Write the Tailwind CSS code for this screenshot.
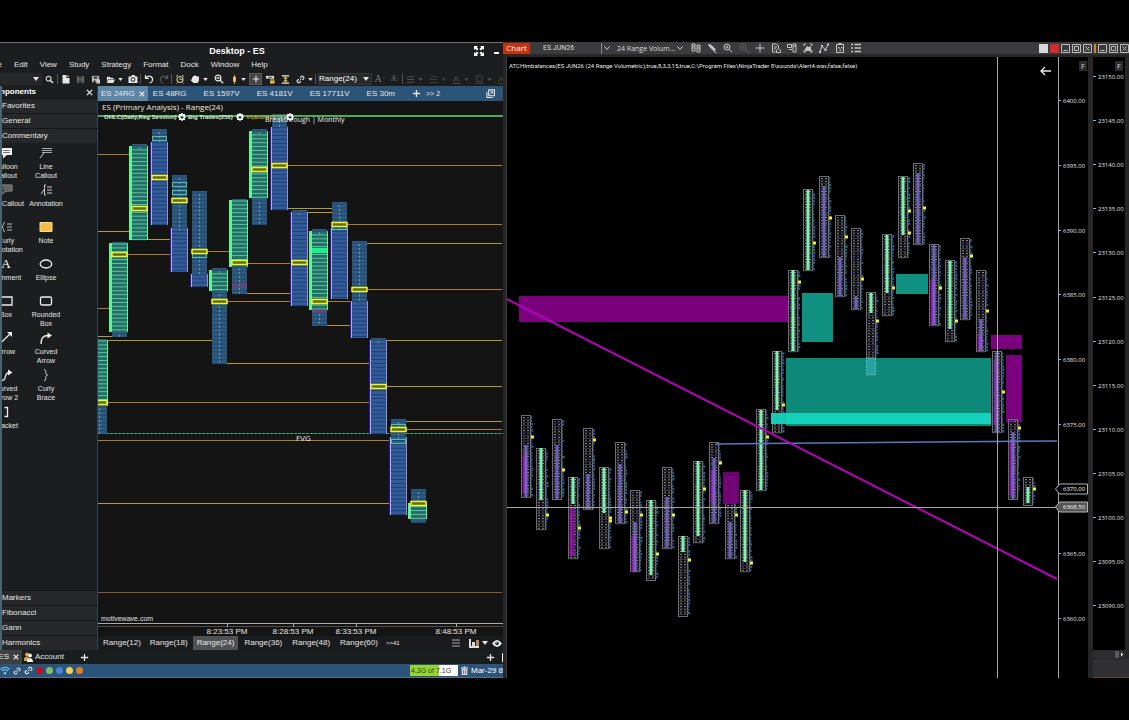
<!DOCTYPE html>
<html lang="en">
<head>
    <meta charset="UTF-8">
    <meta name="viewport" content="width=device-width, initial-scale=1.0">
    <title>Desktop - ES</title>
    <script src="https://cdn.jsdelivr.net/npm/@tailwindcss/browser@4"></script>
</head>
<body class="bg-black">
    <!-- Icon sprites -->
    <svg class="hidden">
        <symbol id="caret" viewBox="0 0 6 4"><path d="M0 0h6L3 4z" fill="currentColor"/></symbol>
        <symbol id="search" viewBox="0 0 10 10"><circle cx="4" cy="4" r="2.7" fill="none" stroke="currentColor" stroke-width="1.2"/><path d="M6 6l3 3" stroke="currentColor" stroke-width="1.6"/></symbol>
        <symbol id="zoomout" viewBox="0 0 10 10"><circle cx="4" cy="4" r="2.9" fill="none" stroke="currentColor" stroke-width="1.2"/><path d="M2.5 4h3M6.2 6.2l3 3" stroke="currentColor" stroke-width="1.3"/></symbol>
        <symbol id="zoomin" viewBox="0 0 10 10"><circle cx="4" cy="4" r="3" fill="none" stroke="currentColor"/><path d="M2.5 4h3M4 2.5v3M6.2 6.2l3 3" stroke="currentColor"/></symbol>
        <symbol id="doc" viewBox="0 0 10 10"><path d="M1.5 1h4v3h3v5.500h-7z M6.500 1l2 2h-2z" fill="currentColor"/></symbol>
        <symbol id="save" viewBox="0 0 10 10"><path d="M1 1h8v8H1z" fill="currentColor"/><path d="M3 1h4v3H3zM3 6h4v3H3z" fill="#1e1e1e"/><path d="M3.5 2.5h3M3.5 7.5h3" stroke="currentColor"/></symbol>
        <symbol id="saveas" viewBox="0 0 10 10"><path d="M1 1h8v7H1z" fill="currentColor"/><path d="M3 2h4v2H3zM3 6h2v2H3z" fill="#1e1e1e"/><path d="M6 5h4v4.500H6z" fill="#ccc"/></symbol>
        <symbol id="folder" viewBox="0 0 10 10"><path d="M1 2h3l1 1h3v1.500H2.500L1 8z" fill="currentColor"/><path d="M3 5h7L8 9H1z" fill="currentColor"/></symbol>
        <symbol id="camera" viewBox="0 0 10 10"><path d="M.5 2.5H3L4 1h2.500l1 1.500h2V9h-9z" fill="currentColor"/><circle cx="5" cy="5.500" r="1.900" fill="none" stroke="#1e1e1e" stroke-width="1"/></symbol>
        <symbol id="undo" viewBox="0 0 10 10"><path d="M1.500 1v3.500H5M2 4c2-3 7-2 6.500 2C8.300 7.500 7 8.700 5.500 9" fill="none" stroke="currentColor" stroke-width="1.2"/></symbol>
        <symbol id="redo" viewBox="0 0 10 10"><path d="M8.500 1v3.500H5M8 4C6 1 1 2 1.500 6c.2 1.500 1.500 2.700 3 3" fill="none" stroke="currentColor" stroke-width="1.2"/></symbol>
        <symbol id="alarm" viewBox="0 0 10 10"><circle cx="5" cy="5.500" r="3" fill="none" stroke="currentColor" stroke-width="1.2"/><path d="M5 3.500v2h2M1 2.500L3 1M9 2.500L7 1M2.500 8.500L1.500 9.500M7.500 8.500l1 1" fill="none" stroke="currentColor"/></symbol>
        <symbol id="hand" viewBox="0 0 10 10"><path d="M2 3.500l1-.5V2h1.300l.2-.7h1l.2.700H7v.6h2v4L7.500 9H3.500L.5 6l.8-.8L2 5.700z" fill="currentColor"/></symbol>
        <symbol id="candle" viewBox="0 0 10 10"><path d="M5 0v10" stroke="#d9b25c"/><path d="M3.500 2h3v5.500h-3z" fill="#f2cf7a"/></symbol>
        <symbol id="plus" viewBox="0 0 10 10"><path d="M5 1v8M1 5h8" stroke="currentColor" stroke-width="1.4"/></symbol>
        <symbol id="lock" viewBox="0 0 10 10"><path d="M0 1h9v3H0z" fill="#e8e8e8"/><path d="M2 2.500h5" stroke="#333"/><path d="M4.500 6h5v3.500h-5z" fill="#e9b949"/><path d="M5.500 6V4.500h3V6" fill="none" stroke="#e9b949"/></symbol>
        <symbol id="ibeam" viewBox="0 0 10 10"><path d="M1 1h8M1 9h8" stroke="#eee" stroke-width="1.4"/><path d="M5 2v6M3 3.500h4M3 6.500h4" stroke="#e9b949" stroke-width="1.3"/></symbol>
        <symbol id="link" viewBox="0 0 10 10"><path d="M4.500 3L6 1.500c1-1 3.500 1 2.500 2.500L7 5.500M5.500 7L4 8.500C3 9.500.5 7.500 1.500 6L3 4.500" fill="none" stroke="currentColor" stroke-width="1.3"/><path d="M3.800 6.200l2.400-2.400" stroke="currentColor"/></symbol>
        <symbol id="lines" viewBox="0 0 10 10"><path d="M1 2h8M1 5h8M1 8h8" stroke="currentColor" stroke-width="1.2"/></symbol>
        <symbol id="bigA" viewBox="0 0 10 10"><path d="M1.500 8L4.500 1l3 7M2.500 5.500h4M.5 9.400h9" fill="none" stroke="currentColor"/></symbol>
        <symbol id="fillbox" viewBox="0 0 10 10"><path d="M2 1h6v6H2zM.5 9.300h9" fill="none" stroke="currentColor"/></symbol>
        <symbol id="close" viewBox="0 0 8 8"><path d="M1 1l6 6M7 1L1 7" stroke="currentColor" stroke-width="1.5"/></symbol>
        <symbol id="popout" viewBox="0 0 10 10"><path d="M3 1h6.500v6.500H3z M1 3v6.500h6.500" fill="none" stroke="currentColor" stroke-width="1.2"/><path d="M4.500 6l3-3M5 3h2.500v2.500" fill="none" stroke="currentColor"/></symbol>
        <symbol id="expand" viewBox="0 0 10 10"><path d="M0 0h4L2.800 1.200l1.700 1.700-1.600 1.600-1.700-1.700L0 4zM10 0v4L8.800 2.800 7.100 4.500 5.500 2.900l1.700-1.700L6 0zM0 10V6l1.200 1.200 1.700-1.700 1.600 1.600-1.700 1.700L4 10zM10 10H6l1.200-1.200-1.700-1.700 1.600-1.600 1.700 1.700L10 6z" fill="currentColor"/></symbol>
        <symbol id="gear" viewBox="0 0 8 8"><circle cx="4" cy="4" r="2.400" fill="none" stroke="#fff" stroke-width="1.6"/><path d="M4 0v1.500M4 6.500V8M0 4h1.500M6.500 4H8M1.200 1.200l1 1M5.800 5.800l1 1M6.800 1.200l-1 1M2.200 5.800l-1 1" stroke="#fff" stroke-width="1.2"/></symbol>
        <symbol id="t-balloon" viewBox="0 0 14 12"><path d="M2 1h11v7H8l-4 3.500V8H2z" fill="#f2f2f2"/><path d="M4 3.500h7M4 5.500h7" stroke="#777"/></symbol>
        <symbol id="t-line" viewBox="0 0 14 12"><path d="M3 1.500h10M3 3.500h10M3 5.500h10" stroke="#aaa"/><path d="M5 6L1 11" stroke="#ccc"/></symbol>
        <symbol id="t-boxcall" viewBox="0 0 14 12"><path d="M2 1h11v6H7l-5 4V7z" fill="#444" stroke="#999"/><path d="M4 3h8M4 5h8" stroke="#888"/></symbol>
        <symbol id="t-annot" viewBox="0 0 14 12"><path d="M7 1H5.500v10H7M5.500 5L2 10M8 3h5M8 6h5M8 9h5" fill="none" stroke="#ccc"/></symbol>
        <symbol id="t-curlyan" viewBox="0 0 14 12"><path d="M6 1C4 1 5 5 3 6H0M3 6c2 1 1 5 3 5M8 3h5M8 6h5M8 9h5" fill="none" stroke="#bbb"/></symbol>
        <symbol id="t-note" viewBox="0 0 14 12"><path d="M1 1.500h12v9H1z" fill="#f2bd4d" stroke="#ffdc8a"/></symbol>
        <symbol id="t-ellipse" viewBox="0 0 14 12"><ellipse cx="7" cy="6" rx="5.800" ry="4" fill="none" stroke="#eee" stroke-width="1.3"/></symbol>
        <symbol id="t-box" viewBox="0 0 14 12"><path d="M1 2h12v8H1z" fill="none" stroke="#eee" stroke-width="1.3"/></symbol>
        <symbol id="t-rbox" viewBox="0 0 14 12"><rect x="1.500" y="2" width="11" height="8" rx="1.500" fill="none" stroke="#eee" stroke-width="1.3"/></symbol>
        <symbol id="t-arrow" viewBox="0 0 14 12"><path d="M1 11.500L11 2" stroke="#eee" stroke-width="1.3"/><path d="M13 0v5L8 0z" fill="#eee"/></symbol>
        <symbol id="t-carrow" viewBox="0 0 14 12"><path d="M2 12C2 6 4 3.500 9 3.500" fill="none" stroke="#eee" stroke-width="1.3"/><path d="M8.500.5l4.500 3-4.500 3z" fill="#eee"/></symbol>
        <symbol id="t-carrow2" viewBox="0 0 14 12"><path d="M1 11c8 2 3-7 9-7.500" fill="none" stroke="#eee" stroke-width="1.3"/><path d="M9 .5l4.500 3-4.500 3z" fill="#eee"/></symbol>
        <symbol id="t-brace" viewBox="0 0 14 12"><path d="M5 .5c3.500 0 0 4.500 3.500 5.500C5 7 8.500 11.500 5 11.500" fill="none" stroke="#ccc"/></symbol>
        <symbol id="t-bracket" viewBox="0 0 14 12"><path d="M5.500 1.500h3v9h-3" fill="none" stroke="#eee" stroke-width="1.3"/></symbol>
    </svg>

    <div class="h-screen flex flex-col py-[42px]">
        <main class="flex-1 min-h-0 grid grid-cols-[503fr_626fr] bg-[#262626]">

            <!-- Analysis window -->
            <section class="min-w-0 flex flex-col overflow-hidden bg-[#1c1d1e] border-t border-[#6f6f6f] text-[8px] leading-[10px] text-[#e6e6e6] font-['Liberation_Sans',sans-serif]">
                <header class="h-[15px] shrink-0 flex items-center">
                    <h1 class="flex-1 text-center text-[9px] font-bold text-white">Desktop - ES</h1>
                    <div class="flex items-center gap-[10px] pr-1 text-white">
                        <button aria-label="Full screen"><svg class="block size-[10px]"><use href="#expand"/></svg></button>
                        <button aria-label="Minimize" class="w-[5px] h-[2px] mt-1 bg-white"></button>
                    </div>
                </header>

                <nav class="h-[14px] shrink-0 flex items-center gap-[12px] -ml-[11px]">
                    <a href="#">File</a>
                    <a href="#">Edit</a>
                    <a href="#">View</a>
                    <a href="#">Study</a>
                    <a href="#">Strategy</a>
                    <a href="#">Format</a>
                    <a href="#">Dock</a>
                    <a href="#">Window</a>
                    <a href="#">Help</a>
                </nav>

                <div class="h-[14px] shrink-0 flex items-center overflow-hidden">
                    <button aria-label="Symbol" class="w-[42px] h-[12px] shrink-0 flex items-center justify-end pr-[3px] bg-[#262728]"><svg class="w-[6px] h-[4px]"><use href="#caret"/></svg></button>
                    <button aria-label="Search" class="w-[15px] shrink-0 flex justify-center"><svg class="size-[9px]"><use href="#search"/></svg></button>
                    <span class="w-px h-[10px] shrink-0 bg-[#555]"></span>
                    <button aria-label="New" class="w-[15px] shrink-0 flex justify-center"><svg class="size-[10px]"><use href="#doc"/></svg></button>
                    <button aria-label="Save" class="w-[15px] shrink-0 flex justify-center text-[#666]"><svg class="size-[9px]"><use href="#save"/></svg></button>
                    <button aria-label="Save as" class="w-[15px] shrink-0 flex justify-center text-[#bbb]"><svg class="size-[9px]"><use href="#saveas"/></svg></button>
                    <button aria-label="Open" class="w-[22px] shrink-0 flex items-center justify-center gap-[3px]"><svg class="size-[9px]"><use href="#folder"/></svg><svg class="w-[5px] h-[3px]"><use href="#caret"/></svg></button>
                    <button aria-label="Snapshot" class="w-[15px] shrink-0 flex justify-center"><svg class="size-[10px]"><use href="#camera"/></svg></button>
                    <span class="w-px h-[10px] shrink-0 bg-[#555]"></span>
                    <button aria-label="Undo" class="w-[15px] shrink-0 flex justify-center"><svg class="size-[10px]"><use href="#undo"/></svg></button>
                    <button aria-label="Redo" class="w-[15px] shrink-0 flex justify-center text-[#555]"><svg class="size-[10px]"><use href="#redo"/></svg></button>
                    <span class="w-px h-[10px] shrink-0 bg-[#555]"></span>
                    <button aria-label="Alerts" class="w-[15px] shrink-0 flex justify-center text-[#cdbf9a]"><svg class="size-[10px]"><use href="#alarm"/></svg></button>
                    <button aria-label="Pan" class="w-[24px] shrink-0 flex items-center justify-center gap-[3px]"><svg class="size-[10px]"><use href="#hand"/></svg><svg class="w-[5px] h-[3px]"><use href="#caret"/></svg></button>
                    <button aria-label="Zoom out" class="w-[16px] shrink-0 flex justify-center"><svg class="size-[10px]"><use href="#zoomout"/></svg></button>
                    <button aria-label="Bar type" class="w-[22px] shrink-0 flex items-center justify-center gap-[2px]"><svg class="size-[9px]"><use href="#candle"/></svg><svg class="w-[5px] h-[3px]"><use href="#caret"/></svg></button>
                    <button aria-label="Cursor" class="w-[13px] h-[12px] shrink-0 flex items-center justify-center bg-[#454545] border border-[#5a5a5a]"><svg class="size-[8px]"><use href="#plus"/></svg></button>
                    <button aria-label="Lock" class="w-[16px] shrink-0 flex justify-center"><svg class="size-[9px]"><use href="#lock"/></svg></button>
                    <button aria-label="Fit" class="w-[15px] shrink-0 flex justify-center"><svg class="size-[9px]"><use href="#ibeam"/></svg></button>
                    <button aria-label="Link" class="w-[22px] shrink-0 flex items-center justify-center gap-[3px]"><svg class="size-[9px]"><use href="#link"/></svg><svg class="w-[5px] h-[3px]"><use href="#caret"/></svg></button>
                    <span class="w-px h-[10px] shrink-0 bg-[#555]"></span>
                    <label class="ml-[2px] w-[54px] h-[12px] shrink-0 flex items-center bg-[#28292a] border border-[#353535]">
                        <select aria-label="Bar size" class="appearance-none w-[44px] leading-[10px] bg-transparent text-white"><option>Range(24)</option></select>
                        <svg class="w-[6px] h-[4px] shrink-0"><use href="#caret"/></svg>
                    </label>
                    <button class="w-[15px] shrink-0 font-['Liberation_Serif',serif] text-[10px] text-[#777]">A<sup class="text-[5px]">+</sup></button>
                    <button class="w-[15px] shrink-0 font-['Liberation_Serif',serif] text-[8px] text-[#777]">A<sup class="text-[5px]">-</sup></button>
                    <span class="w-px h-[10px] shrink-0 bg-[#555]"></span>
                    <button aria-label="Line width" class="w-[23px] shrink-0 flex items-center justify-center gap-[3px] text-[#505050]"><svg class="size-[9px]"><use href="#lines"/></svg><svg class="w-[5px] h-[3px]"><use href="#caret"/></svg></button>
                    <button aria-label="Line style" class="w-[23px] shrink-0 flex items-center justify-center gap-[3px] text-[#3c3c3c]"><svg class="size-[9px]"><use href="#lines"/></svg><svg class="w-[5px] h-[3px]"><use href="#caret"/></svg></button>
                    <button aria-label="Text color" class="w-[23px] shrink-0 flex items-center justify-center gap-[3px] text-[#4a4a4a]"><svg class="size-[9px]"><use href="#bigA"/></svg><svg class="w-[5px] h-[3px]"><use href="#caret"/></svg></button>
                    <button aria-label="Fill color" class="w-[23px] shrink-0 flex items-center justify-center gap-[3px] text-[#4a4a4a]"><svg class="size-[9px]"><use href="#fillbox"/></svg><svg class="w-[5px] h-[3px]"><use href="#caret"/></svg></button>
                    <button aria-label="Erase" class="w-[12px] shrink-0 flex justify-center text-[#3c3c3c]"><svg class="size-[9px]"><use href="#bigA"/></svg></button>
                </div>

                <div class="flex-1 min-h-0 flex">
                    <!-- Components -->
                    <aside class="w-[97px] shrink-0 flex flex-col overflow-hidden border-l-2 border-[#4b6474]">
                        <div class="h-[12px] shrink-0 flex items-center justify-between pr-1">
                            <h2 class="w-[34px] flex justify-end overflow-hidden font-bold text-white">Components</h2>
                            <button aria-label="Close components"><svg class="block size-[7px]"><use href="#close"/></svg></button>
                        </div>
                        <button class="h-[15px] shrink-0 text-left bg-[#262728] border-t border-[#161616]">Favorites</button>
                        <button class="h-[15px] shrink-0 text-left bg-[#262728] border-t border-[#161616]">General</button>
                        <button class="h-[15px] shrink-0 text-left bg-[#262728] border-t border-[#161616]">Commentary</button>
                        <div class="flex-1 pt-[4px] -ml-[16px] grid grid-cols-[40px_40px] auto-rows-[37px] text-[7px] leading-[9px]">
                            <button class="flex flex-col items-center gap-[3px]"><svg class="w-[14px] h-[12px] shrink-0"><use href="#t-balloon"/></svg><span class="w-[24px]">Balloon Callout</span></button>
                            <button class="flex flex-col items-center gap-[3px]"><svg class="w-[14px] h-[12px] shrink-0"><use href="#t-line"/></svg><span class="w-[24px]">Line Callout</span></button>
                            <button class="flex flex-col items-center gap-[3px]"><svg class="w-[14px] h-[12px] shrink-0"><use href="#t-boxcall"/></svg><span class="whitespace-nowrap">Box Callout</span></button>
                            <button class="flex flex-col items-center gap-[3px]"><svg class="w-[14px] h-[12px] shrink-0"><use href="#t-annot"/></svg>Annotation</button>
                            <button class="flex flex-col items-center gap-[3px]"><svg class="w-[14px] h-[12px] shrink-0"><use href="#t-curlyan"/></svg>Curly Annotation</button>
                            <button class="flex flex-col items-center gap-[3px]"><svg class="w-[14px] h-[12px] shrink-0"><use href="#t-note"/></svg>Note</button>
                            <button class="flex flex-col items-center gap-[3px]"><span class="h-[12px] shrink-0 font-['Liberation_Serif',serif] text-[13px] leading-[12px] text-white">A</span>Comment</button>
                            <button class="flex flex-col items-center gap-[3px]"><svg class="w-[14px] h-[12px] shrink-0"><use href="#t-ellipse"/></svg>Ellipse</button>
                            <button class="flex flex-col items-center gap-[3px]"><svg class="w-[14px] h-[12px] shrink-0"><use href="#t-box"/></svg>Box</button>
                            <button class="flex flex-col items-center gap-[3px]"><svg class="w-[14px] h-[12px] shrink-0"><use href="#t-rbox"/></svg><span class="w-[34px]">Rounded Box</span></button>
                            <button class="flex flex-col items-center gap-[3px]"><svg class="w-[14px] h-[12px] shrink-0"><use href="#t-arrow"/></svg>Arrow</button>
                            <button class="flex flex-col items-center gap-[3px]"><svg class="w-[14px] h-[12px] shrink-0"><use href="#t-carrow"/></svg>Curved Arrow</button>
                            <button class="flex flex-col items-center gap-[3px]"><svg class="w-[14px] h-[12px] shrink-0"><use href="#t-carrow2"/></svg>Curved Arrow 2</button>
                            <button class="flex flex-col items-center gap-[3px]"><svg class="w-[14px] h-[12px] shrink-0"><use href="#t-brace"/></svg><span class="w-[24px]">Curly Brace</span></button>
                            <button class="flex flex-col items-center gap-[3px]"><svg class="w-[14px] h-[12px] shrink-0"><use href="#t-bracket"/></svg>Bracket</button>
                        </div>
                        <button class="h-[15px] shrink-0 text-left bg-[#262728] border-t border-[#161616]">Markers</button>
                        <button class="h-[15px] shrink-0 text-left bg-[#262728] border-t border-[#161616]">Fibonacci</button>
                        <button class="h-[15px] shrink-0 text-left bg-[#262728] border-t border-[#161616]">Gann</button>
                        <button class="h-[15px] shrink-0 text-left bg-[#262728] border-t border-[#161616]">Harmonics</button>
                    </aside>

                    <div class="flex-1 min-w-0 flex flex-col border-l border-[#28445e]">
                        <nav class="h-[15px] shrink-0 flex items-center gap-[17px] pr-1 overflow-hidden whitespace-nowrap bg-[#2c5479]">
                            <span class="h-full flex items-center gap-1 px-[3px] -mr-3 bg-[#5e86a8]"><a href="#">ES 24RG</a><button aria-label="Close tab"><svg class="block size-[6px]"><use href="#close"/></svg></button></span>
                            <a href="#">ES 48RG</a>
                            <a href="#">ES 1597V</a>
                            <a href="#">ES 4181V</a>
                            <a href="#">ES 17711V</a>
                            <a href="#">ES 30m</a>
                            <button aria-label="Add tab"><svg class="block size-[9px]"><use href="#plus"/></svg></button>
                            <a href="#" class="-ml-3 text-[7px]">&gt;&gt; 2</a>
                            <button aria-label="Pop out" class="ml-auto mr-1"><svg class="block size-[9px]"><use href="#popout"/></svg></button>
                        </nav>
                        <div class="flex-1 min-h-0 bg-[#141414]">
                            <svg id="rangeChart" class="block size-full" viewBox="98 101 405 535" preserveAspectRatio="xMinYMin meet"></svg>
                        </div>
                        <nav class="h-[14px] shrink-0 flex items-center pr-px overflow-hidden whitespace-nowrap bg-[#1a1b1c]">
                            <a href="#" class="px-[5px]">Range(12)</a>
                            <a href="#" class="px-[4px]">Range(18)</a>
                            <a href="#" class="mx-px px-[4px] py-[2px] bg-[#505152]">Range(24)</a>
                            <a href="#" class="px-[5px]">Range(36)</a>
                            <a href="#" class="px-[5px]">Range(48)</a>
                            <a href="#" class="px-[5px]">Range(60)</a>
                            <a href="#" class="px-[3px] text-[6px]">&gt;&gt;41</a>
                            <div class="ml-auto flex items-center gap-[4px]">
                                <button aria-label="List" class="mr-1"><svg class="block size-[10px] text-[#aaa]"><use href="#lines"/></svg></button>
                                <button aria-label="Layout" class="flex items-center gap-[2px]"><svg class="w-[11px] h-[9px]" viewBox="0 0 11 9"><path d="M0 0h2v7h8v2H0z" fill="#ddd"/><path d="M3 3h3v4H3z" fill="#ddd"/><path d="M7 1h3v6H7z" fill="#b98a55"/></svg><svg class="w-[6px] h-[4px]"><use href="#caret"/></svg></button>
                                <button aria-label="Visibility"><svg class="block w-[10px] h-[7px]" viewBox="0 0 10 7"><path d="M0 3.500Q5-3.500 10 3.500Q5 10.500 0 3.500z" fill="#eee"/><circle cx="5" cy="3.500" r="1.800" fill="#222"/><circle cx="4.500" cy="3" r=".6" fill="#fff"/></svg></button>
                            </div>
                        </nav>
                    </div>
                </div>

                <!-- Account row -->
                <div class="h-[14px] shrink-0 flex items-center bg-[#1a1d1e]">
                    <a href="#" class="w-[22px] h-full flex items-center justify-end gap-1 pr-[3px] overflow-hidden bg-[#3e3f40]">ES <svg class="size-[6px] shrink-0"><use href="#close"/></svg></a>
                    <a href="#" class="flex items-center gap-[2px] pl-[2px]">
                        <svg class="w-[9px] h-[10px]" viewBox="0 0 9 10"><circle cx="3" cy="2.500" r="2" fill="#d9a441"/><path d="M0 9V6l3-1.500L5 6v3z" fill="#d9a441"/><circle cx="6" cy="3.500" r="1.900" fill="#fff"/><path d="M3 10c0-5 6-5 6 0z" fill="#fff"/></svg>
                        Account
                    </a>
                    <button aria-label="Add account" class="ml-4"><svg class="block size-[9px]"><use href="#plus"/></svg></button>
                    <button aria-label="Add panel" class="ml-auto mr-[7px]"><svg class="block size-[9px]"><use href="#plus"/></svg></button>
                    <span class="w-px h-[9px] bg-white"></span>
                </div>

                <!-- Status bar -->
                <footer class="h-[14px] shrink-0 flex items-center gap-[3px] overflow-hidden bg-[#2c5479] border-b border-[#54728c]">
                    <svg class="w-[10px] h-[9px] shrink-0" viewBox="0 0 9 9"><path d="M0 3.500Q4.500-1 9 3.500M1.500 5.200Q4.500 2.200 7.500 5.200" fill="none" stroke="#7fc4f0" stroke-width="1.1"/><circle cx="4.500" cy="7.200" r="1.300" fill="#7fc4f0"/></svg>
                    <svg class="size-[8px] shrink-0"><use href="#link"/></svg>
                    <svg class="size-[9px] shrink-0"><use href="#link"/></svg>
                    <span class="size-[7px] shrink-0 rounded-full bg-[#c00f22]"></span>
                    <span class="size-[7px] shrink-0 rounded-full bg-[#7dbd62]"></span>
                    <span class="size-[7px] shrink-0 rounded-full bg-[#4d83d6]"></span>
                    <span class="size-[7px] shrink-0 rounded-full bg-[#f0cf52]"></span>
                    <span class="size-[7px] shrink-0 rounded-full bg-[#e07d20]"></span>
                    <span class="ml-auto w-[48px] h-[11px] shrink-0 pl-px text-[7px] leading-[11px] whitespace-nowrap text-[#333] bg-linear-to-r from-[#93d72c] from-60% to-white to-60%">4.3G of 7.1G</span>
                    <svg class="w-[7px] h-[9px] shrink-0" viewBox="0 0 7 9"><path d="M0 2h7M2.500 1h2" stroke="#fff"/><path d="M.7 3h5.600v6H.7z" fill="#ddd"/><path d="M2.500 4v4M4.500 4v4" stroke="#a66"/></svg>
                    <span class="w-[32px] shrink-0 overflow-hidden whitespace-nowrap text-white">Mar-29 8:4</span>
                </footer>
            </section>

            <!-- Volumetric chart window -->
            <section class="min-w-0 flex flex-col overflow-hidden text-[6px] leading-[8px] text-[#d8d8d8] font-['Open_Sans',sans-serif]">
                <header class="h-[13px] shrink-0 flex items-center bg-[#3b3b3d] border-b border-[#2a2a2a]">
                    <h2 class="w-[27px] h-[11px] flex items-center justify-center bg-[#c8310f] text-[8px] text-white">Chart</h2>
                    <input aria-label="Instrument" value="ES JUN26" class="ml-[10px] pl-[3px] w-[62px] h-[11px] bg-transparent border-r border-[#888] font-['Roboto',sans-serif] text-[7px]">
                    <svg class="w-[6px] h-[4px] ml-[2px]" viewBox="0 0 6 4"><path d="M.5.5L3 3.500 5.500.5" fill="none" stroke="#ccc"/></svg>
                    <select aria-label="Interval" class="appearance-none ml-[7px] w-[60px] bg-transparent text-[7px] leading-[9px]"><option>24 Range Volum...</option></select>
                    <svg class="w-[6px] h-[4px]" viewBox="0 0 6 4"><path d="M.5.5L3 3.500 5.500.5" fill="none" stroke="#ccc"/></svg>
                    <div class="ml-[8px] flex items-center gap-[6px] text-[#c4c4c4]">
                        <button aria-label="Chart style"><svg class="block size-[10px]" viewBox="0 0 10 10"><path d="M1 1h3v7H1zM6 2h3v7H6zM1 3h3M1 5h3M6 4h3M6 6h3" fill="none" stroke="currentColor"/></svg></button>
                        <button aria-label="Draw"><svg class="block size-[10px]" viewBox="0 0 10 10"><path d="M1 1l1 2.500 5 5 2-2-5-5z" fill="currentColor"/><path d="M9.500 9.500L7 8.500" stroke="currentColor"/></svg></button>
                        <button aria-label="Zoom in"><svg class="block size-[10px]"><use href="#zoomin"/></svg></button>
                        <button aria-label="Zoom out" class="text-[#555]"><svg class="block size-[10px]"><use href="#zoomout"/></svg></button>
                        <button aria-label="Crosshair"><svg class="block size-[10px]" viewBox="0 0 10 10"><path d="M5 .5v9M.5 5h9" stroke="currentColor"/></svg></button>
                        <button aria-label="Data box"><svg class="block size-[10px]" viewBox="0 0 10 10"><path d="M1.500 1h4l2 2v2M1.500 1v8h3M3 4h3M3 6h2M5.500 9.500V7L7.500 5.500 9.500 7v2.500z" fill="none" stroke="currentColor"/></svg></button>
                        <button aria-label="Trader"><svg class="block size-[10px]" viewBox="0 0 10 10"><path d="M.5 1.500h4v3h-4zM6 1h3v8H6zM2 6.500h3M6 3h3" fill="none" stroke="currentColor"/></svg></button>
                        <button aria-label="Indicators"><svg class="block size-[10px]" viewBox="0 0 10 10"><path d="M1 3V1h2M7 1h2v2M9 7v2H7M3 9H1V7" fill="none" stroke="currentColor"/><path d="M2 8V6l2-3 2 1 2-1v5z" fill="currentColor"/></svg></button>
                        <button aria-label="Strategies"><svg class="block size-[10px]" viewBox="0 0 10 10"><path d="M1 8.500L3 3l3.500 4L9 1.500" fill="none" stroke="currentColor"/><path d="M0 8h2v2H0zM2 2h2v2H2zM5.500 6h2v2h-2zM8 .5h2v2H8z" fill="currentColor"/></svg></button>
                        <button aria-label="Properties"><svg class="block size-[10px]" viewBox="0 0 10 10"><path d="M1.500 1.500h7v8h-7zM3.500.5h3" fill="none" stroke="currentColor"/><path d="M3 4h1.500v1.500H3zM6 4h1.500v1.500H6zM4.500 6.500H6V8H4.500z" fill="currentColor"/></svg></button>
                        <button aria-label="List"><svg class="block size-[10px]" viewBox="0 0 10 10"><path d="M3.500 1.500H10M3.500 5H10M3.500 8.500H10M0 1.500h2M0 5h2M0 8.500h2" stroke="currentColor" stroke-width="1.4"/></svg></button>
                    </div>
                    <div class="ml-auto flex items-center gap-[2px]">
                        <button aria-label="Link instrument" class="size-[9px] bg-[#d8d8d8]"></button>
                        <button aria-label="Link interval" class="size-[9px] bg-[#d42a2a]"></button>
                        <button aria-label="Minimize"><svg class="block size-[9px]" viewBox="0 0 9 9"><path d="M.5.5h8v8h-8zM2.500 6.500h4" fill="none" stroke="#bbb"/></svg></button>
                        <button aria-label="Maximize"><svg class="block size-[9px]" viewBox="0 0 9 9"><path d="M.5.5h8v8h-8zM2.500 2.500h4v4h-4z" fill="none" stroke="#bbb"/></svg></button>
                        <button aria-label="Close"><svg class="block size-[9px]" viewBox="0 0 9 9"><path d="M.5.5h8v8h-8zM2.500 2.500l4 4M6.500 2.500l-4 4" fill="none" stroke="#bbb"/></svg></button>
                        <span class="w-[2px] h-[9px] bg-[#c98a2e]"></span>
                        <button aria-label="Minimize second"><svg class="block size-[9px]" viewBox="0 0 9 9"><path d="M.5.5h8v8h-8zM2.500 6.500h4" fill="none" stroke="#bbb"/></svg></button>
                        <button aria-label="Maximize second"><svg class="block size-[9px]" viewBox="0 0 9 9"><path d="M.5.5h8v8h-8zM2.500 2.500h4v4h-4z" fill="none" stroke="#bbb"/></svg></button>
                        <button aria-label="Close second"><svg class="block size-[9px]" viewBox="0 0 9 9"><path d="M.5.5h8v8h-8zM2.500 2.500l4 4M6.500 2.500l-4 4" fill="none" stroke="#bbb"/></svg></button>
                    </div>
                </header>
                <svg id="volChart" class="block w-full flex-1 min-h-0" viewBox="503 55 626 623" preserveAspectRatio="xMinYMin meet"></svg>
            </section>
        </main>
    </div>

    <script>
        const NS = 'http://www.w3.org/2000/svg';

        function add(parent, tag, attrs, text) {
            const el = document.createElementNS(NS, tag);
            for (const k in attrs) el.setAttribute(k, attrs[k]);
            if (text) el.textContent = text;
            parent.appendChild(el);
            return el;
        }
        function rect(p, x, y, w, h, fill, extra) {
            return add(p, 'rect', Object.assign({ x: x, y: y, width: w, height: h, fill: fill }, extra));
        }
        function line(p, x1, y1, x2, y2, stroke, w, extra) {
            return add(p, 'line', Object.assign({ x1: x1, y1: y1, x2: x2, y2: y2, stroke: stroke, 'stroke-width': w || 1 }, extra));
        }

        // ---- Range(24) chart ----
        const range = document.getElementById('rangeChart');
        const O = '#b27a2c', Y = '#b39c34';

        // x1, x2, y, color
        const levels = [
            [98, 130, 154, O], [98, 130, 231, Y], [148, 170, 239, Y], [128, 170, 254, O], [98, 110, 308, O],
            [98, 112, 336, Y], [107, 212, 340, Y], [207, 230, 251, O], [247, 291, 263, O], [246, 290, 293, Y],
            [227, 292, 301, O], [226, 371, 363, Y], [287, 502, 165, O], [287, 332, 208, Y], [307, 332, 212, Y],
            [346, 502, 224, O], [366, 502, 243, Y], [366, 502, 289, O], [326, 350, 301, O], [326, 350, 325, Y],
            [386, 502, 340, Y], [386, 502, 386, Y], [98, 370, 402, O], [406, 502, 421, Y], [406, 502, 429, O],
            [98, 390, 440, O], [98, 389, 503, Y], [98, 502, 592, '#8a5a33']
        ];
        levels.forEach(l => line(range, l[0], l[2] + 0.5, l[1], l[2] + 0.5, l[3]));
        line(range, 98, 433.5, 503, 433.5, '#35b07a', 1, { 'stroke-dasharray': '3 1' });

        // x, top, bottom, body top, body bottom, up, point of control, outlined rows
        const bars = [
            [92, 339, 434, 340, 406, true, 402, []],
            [112, 242, 337, 243, 332, true, 254, []],
            [132, 144, 240, 146, 240, true, 208, []],
            [152, 129, 225, 142, 225, false, 177, [138]],
            [172, 175, 272, 228, 272, false, 200, [184, 192]],
            [192, 191, 287, 274, 287, false, 251, [255]],
            [212, 268, 364, 270, 291, true, 301, []],
            [232, 199, 294, 200, 267, true, 262, []],
            [252, 129, 225, 131, 198, true, 169, []],
            [272, 114, 210, 127, 210, false, 165, []],
            [292, 210, 306, 212, 306, false, 262, []],
            [312, 229, 326, 231, 310, true, 301, []],
            [332, 202, 299, 228, 299, false, 224, [227]],
            [352, 241, 338, 301, 338, false, 289, []],
            [371, 338, 434, 340, 434, false, 386, []],
            [391, 419, 515, 437, 515, false, 429, [426, 441]],
            [411, 489, 523, 503, 519, true, 503, []]
        ];
        const step = 3.9;
        bars.forEach(b => {
            const [x, top, bottom, bt, bb, up, poc, boxes] = b;
            rect(range, x, top, 15, bottom - top, '#2d5b80');
            if (up) rect(range, x, bt, 15, bb - bt, '#286a68');
            else rect(range, x, bt, 15, bb - bt, '#315d94');
            for (let y = top + 2; y < bottom; y += step) {
                const inBody = y > bt && y < bb;
                line(range, x, y, x + 15, y, inBody ? (up ? '#4fcf98' : '#213d80') : '#23476f', 1);
                if (!inBody && y + 3 < bottom) rect(range, x + 7, y + 1, 1, 2, '#7699ad');
            }
            if (up) {
                rect(range, x - 3, bt, 3, bb - bt, '#5cf59a');
                rect(range, x + 15, bt, 1, bb - bt, '#5cf59a');
            } else {
                rect(range, x - 2, bt, 1, bb - bt, '#2c16a8');
                rect(range, x - 1, bt, 1, bb - bt, '#b9a8ee');
                rect(range, x + 15, bt, 1, bb - bt, '#9b8cd6');
            }
            boxes.forEach(y => rect(range, x + 0.5, y - 1.5, 14, 4, 'none', { stroke: '#4fc49a' }));
            rect(range, x, poc - 1.5, 15, 4, '#5f6a1c', { stroke: '#f1f52c', 'stroke-width': 1.5 });
        });
        rect(range, 312, 248, 15, 5, '#17f08c');
        rect(range, 232.5, 284, 14, 3, 'none', { stroke: '#8d3f78' });
        rect(range, 312.5, 310, 14, 2, 'none', { stroke: '#8d3f78' });

        line(range, 98, 116, 503, 116, '#5be070', 1.5);
        function label(x, y, s, size, fill, extra) {
            add(range, 'text', Object.assign({ x: x, y: y, 'font-size': size, fill: fill }, extra), s);
        }
        label(102, 110, 'ES (Primary Analysis) - Range(24)', 8, '#f0ead8', { 'font-family': 'Open Sans, sans-serif' });
        label(104, 119, 'OHLC(Daily,Reg Session)', 6, '#d9efd9', { 'font-weight': 'bold' });
        label(188, 119, 'Big Trades(250)', 6, '#d9efd9', { 'font-weight': 'bold' });
        label(246, 119, 'VI(Bid/Ask, V)', 6, '#b39b2b', { 'font-weight': 'bold' });
        [[178, 113], [236, 113], [286, 113]].forEach(g => add(range, 'use', { href: '#gear', x: g[0], y: g[1], width: 8, height: 8 }));
        label(265, 122, 'Breakthrough | Monthly', 7, '#f0f0f0', { 'font-family': 'Open Sans, sans-serif' });
        label(296, 441, 'FVG', 8, '#e8e8e8', { 'font-family': 'Open Sans, sans-serif' });
        label(101, 621, 'motivewave.com', 7, '#e0e0e0');

        line(range, 98, 623.5, 503, 623.5, '#a9a9a9');
        line(range, 98, 626.5, 503, 626.5, '#4c4c4c');
        [[227, '8:23:53 PM'], [293, '8:28:53 PM'], [356, '8:33:53 PM'], [456, '8:48:53 PM']].forEach(t => {
            line(range, t[0] + 0.5, 624, t[0] + 0.5, 627, '#a9a9a9');
            label(t[0], 634, t[1], 8, '#e6e6e6', { 'text-anchor': 'middle' });
        });

        // ---- Volumetric chart ----
        const vol = document.getElementById('volChart');
        rect(vol, 507, 57, 581, 621, '#000');
        rect(vol, 1093, 57, 32, 593, '#000');
        line(vol, 506.5, 57, 506.5, 678, '#3a3a3a');

        const P = '#7b007d', T = '#0f9080';
        // x, y, width, height, color
        [
            [519, 296, 269, 26, P], [802, 293, 31, 49, T], [896, 274, 32, 20, T],
            [991, 335, 31, 14, P], [1006, 355, 16, 67, P]
        ].forEach(z => rect(vol, z[0], z[1], z[2], z[3], z[4]));

        // x, top, bottom, body top, body bottom, color, points of control, imbalance range
        const G = '#7cf2ab', B = '#7a6fd8';
        const cells = [
            [521, 415, 498, 445, 497, B, [437], [455, 493]],
            [536, 448, 530, 448, 500, G, [515]],
            [552, 419, 500, 445, 499, B, [470]],
            [568, 477, 559, 477, 504, G, [528], [508, 556]],
            [583, 428, 510, 474, 509, B, [440]],
            [599, 467, 549, 468, 513, G, [518, 521]],
            [615, 442, 524, 464, 523, B, [512]],
            [630, 490, 572, 522, 572, B, [515], [536, 572]],
            [646, 500, 581, 500, 575, G, [554]],
            [662, 467, 549, 497, 548, B, [515]],
            [678, 536, 617, 536, 552, G, [560]],
            [693, 461, 543, 461, 536, G, [489]],
            [709, 442, 524, 458, 523, B, [463], [470, 504]],
            [725, 477, 559, 522, 558, B, [515]],
            [740, 490, 572, 490, 562, G, [563]],
            [756, 409, 491, 410, 490, G, [437]],
            [772, 351, 433, 351, 410, G, [405]],
            [788, 270, 352, 270, 351, G, [282]],
            [803, 189, 271, 190, 270, G, [243]],
            [819, 176, 258, 186, 257, B, [218]],
            [835, 215, 297, 257, 296, B, [237]],
            [851, 228, 310, 296, 309, B, [279]],
            [866, 292, 375, 293, 313, G, [321]],
            [882, 234, 316, 235, 293, G, [288]],
            [898, 176, 258, 177, 235, G, [211, 233]],
            [913, 163, 245, 173, 244, B, [208]],
            [929, 244, 326, 245, 325, B, [288], [280, 325]],
            [945, 260, 342, 261, 329, G, [321]],
            [960, 238, 320, 257, 319, B, [256]],
            [976, 270, 352, 319, 351, B, [311], [335, 350]],
            [992, 351, 433, 352, 432, B, [392], [360, 425]],
            [1008, 419, 500, 432, 499, B, [428], [440, 495]],
            [1023, 477, 506, 487, 503, G, [489]]
        ];
        let seed = 7;
        function rnd() {
            seed = (seed * 16807) % 2147483647;
            return seed / 2147483647;
        }
        cells.forEach(c => {
            const [x, top, bottom, bt, bb, color, pocs, imb] = c;
            rect(vol, x + 0.5, top + 0.5, 9, bottom - top - 1, 'none', { stroke: '#6d6d70' });
            for (let y = top + 2.5; y < bottom - 1; y += 3.24) {
                line(vol, x + 2, y, x + 4, y, rnd() > 0.8 ? '#5448c0' : '#8b8b90');
                line(vol, x + 6, y, x + 8, y, rnd() > 0.8 ? '#4b3fae' : '#8b8b90');
                line(vol, x + 1, y + 1.6, x + 9, y + 1.6, '#3b3b40');
                // volume profile on the right edge
                line(vol, x + 10, y, x + 10.6 + rnd() * 2, y, rnd() > 0.15 ? '#34507c' : '#23705f', 2.6);
            }
            if (imb) rect(vol, x + 1.5, imb[0], 5, imb[1] - imb[0], '#a114b8', { 'fill-opacity': 0.75 });
            rect(vol, x + 3.5, bt, 3, bb - bt, color, { 'fill-opacity': color === G ? 1 : 0.85 });
            pocs.forEach(y => rect(vol, x + 10, y - 1.5, 3, 3, '#f3ef2a'));
        });
        rect(vol, 723, 472, 16, 32, P, { 'fill-opacity': 0.9 });

        rect(vol, 786, 358, 205, 68, T, { 'fill-opacity': 0.95 });
        rect(vol, 771, 413, 220, 11, '#17d8c2', { 'fill-opacity': 0.92 });
        rect(vol, 866.5, 358, 9, 17, '#35b3c0', { 'fill-opacity': 0.6, stroke: '#5fb5b0', 'stroke-dasharray': '2 1' });

        line(vol, 716, 444, 1057, 441, '#5579c4', 1.5);
        line(vol, 507, 299, 1057, 579, '#b800bd', 2);
        line(vol, 997.5, 57, 997.5, 678, '#a5a5a5');
        line(vol, 507, 507.5, 1058, 507.5, '#a5a5a5');
        line(vol, 1058.5, 57, 1058.5, 678, '#a5a5a5');

        function tick(x, y, s) {
            line(vol, x, y + 0.5, x + 3, y + 0.5, '#a5a5a5');
            add(vol, 'text', { x: x + 5, y: y + 3, 'font-size': 6, fill: '#e2e2e2' }, s);
        }
        [[100, '6400.00'], [165, '6395.00'], [230, '6390.00'], [294, '6385.00'], [359, '6380.00'], [424, '6375.00'], [553, '6365.00'], [618, '6360.00']].forEach(t => tick(1058, t[0], t[1]));
        for (let i = 0; i <= 12; i++) tick(1093, Math.round(76 + i * 44.1), (23150 - i * 5) + '.00');

        add(vol, 'path', { d: 'M1055.500 489l4-5h28v10h-28z', fill: '#000', stroke: '#b5b5b5' });
        add(vol, 'path', { d: 'M1055.500 507l4-5h28v10h-28z', fill: '#555', stroke: '#b5b5b5' });
        add(vol, 'text', { x: 1063, y: 491, 'font-size': 6, fill: '#fff' }, '6370.00');
        add(vol, 'text', { x: 1063, y: 509, 'font-size': 6, fill: '#fff' }, '6368.50');

        [1079, 1115].forEach(x => {
            rect(vol, x, 61, 8, 10, '#2b2b2b');
            add(vol, 'text', { x: x + 2, y: 69, 'font-size': 7, fill: '#ddd' }, 'F');
        });
        add(vol, 'path', { d: 'M1051 71h-10M1045 67l-4 4 4 4', fill: 'none', stroke: '#e8e8e8', 'stroke-width': 1.3 });
        add(vol, 'text', { x: 509, y: 68, 'font-size': 6, fill: '#e8e8e8', 'font-family': 'Roboto, sans-serif' }, 'ATCHImbalances(ES JUN26 (24 Range Volumetric),true,8,3,3,15,true,C:\\Program Files\\NinjaTrader 8\\sounds\\Alert4.wav,false,false)');

        // scroll bar of the second price axis
        rect(vol, 1093, 651, 32, 7, '#2e2e30');
        rect(vol, 1115, 651, 4, 7, '#5a5a5c');
        add(vol, 'path', { d: 'M1121 652.500v4l2-2z', fill: '#fff' });
        rect(vol, 1093, 659, 36, 18, '#303032');
        line(vol, 1093, 677.5, 1129, 677.5, '#6b3f30');
    </script>
</body>
</html>
